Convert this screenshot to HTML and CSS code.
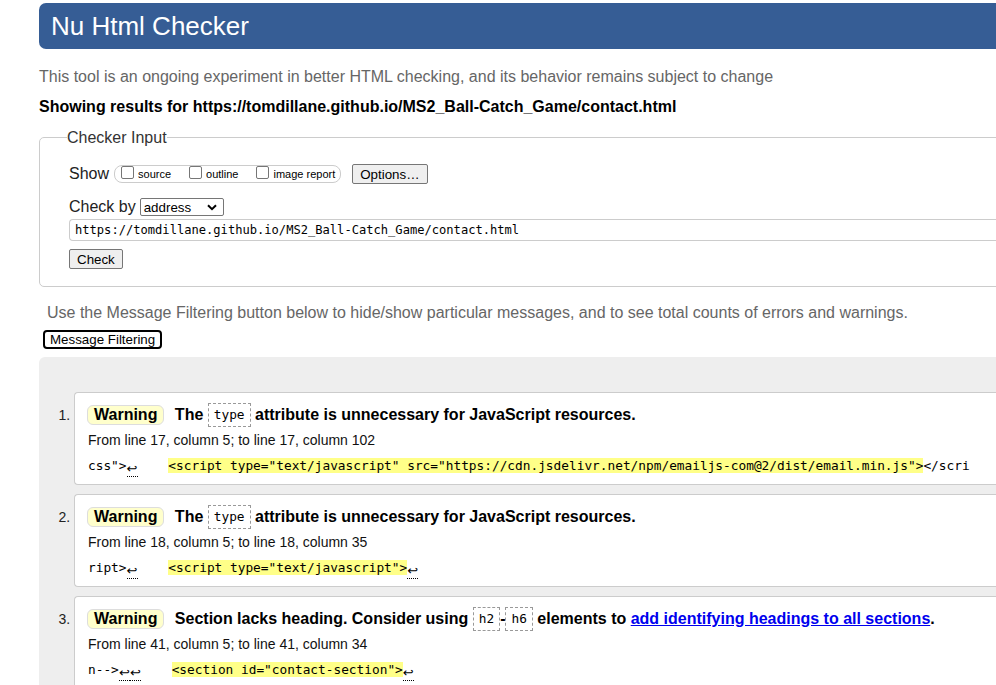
FILE: index.html
```
<!DOCTYPE html>
<html lang="en">
<head>
<meta charset="utf-8">
<title>Nu Html Checker</title>
<link rel="stylesheet" href="styles.css">
</head>
<body>
<div class="page">
  <h1 class="brand">Nu Html Checker</h1>
  <p class="intro">This tool is an ongoing experiment in better HTML checking, and its behavior remains subject to change</p>
  <p class="showing">Showing results for https://tomdillane.github.io/MS2_Ball-Catch_Game/contact.html</p>

  <fieldset class="checker">
    <legend>Checker Input</legend>
    <div class="row show-row">
      <span class="lbl">Show</span>
      <span class="opts">
        <label class="opt"><span class="cb"></span>source</label>
        <label class="opt"><span class="cb"></span>outline</label>
        <label class="opt"><span class="cb"></span>image report</label>
      </span>
      <span class="btn options">Options…</span>
    </div>
    <div class="row checkby-row">
      <span class="lbl">Check by</span>
      <span class="select">address<svg class="chev" width="10" height="7" viewBox="0 0 10 7"><path d="M1 1.2 L5 5.2 L9 1.2" fill="none" stroke="#000" stroke-width="2"/></svg></span>
    </div>
    <div class="url">https://tomdillane.github.io/MS2_Ball-Catch_Game/contact.html</div>
    <span class="btn check">Check</span>
  </fieldset>

  <p class="filter-note">Use the Message Filtering button below to hide/show particular messages, and to see total counts of errors and warnings.</p>
  <span class="btn filter-btn">Message Filtering</span>

  <div class="results">
    <ol class="msgs">
      <li class="msg">
        <p class="title"><strong class="badge">Warning</strong> <span>The <code class="tag">type</code> attribute is unnecessary for JavaScript resources.</span></p>
        <p class="loc">From line 17, column 5; to line 17, column 102</p>
        <p class="extract">css"&gt;<span class="lf">↩</span>    <b>&lt;script type="text/javascript" src="https://cdn.jsdelivr.net/npm/emailjs-com@2/dist/email.min.js"&gt;</b>&lt;/scri</p>
      </li>
      <li class="msg">
        <p class="title"><strong class="badge">Warning</strong> <span>The <code class="tag">type</code> attribute is unnecessary for JavaScript resources.</span></p>
        <p class="loc">From line 18, column 5; to line 18, column 35</p>
        <p class="extract">ript&gt;<span class="lf">↩</span>    <b>&lt;script type="text/javascript"&gt;</b><span class="lf">↩</span></p>
      </li>
      <li class="msg">
        <p class="title"><strong class="badge">Warning</strong> <span>Section lacks heading. Consider using <code class="tag">h2</code>-<code class="tag">h6</code> elements to <a href="#">add identifying headings to all sections</a>.</span></p>
        <p class="loc">From line 41, column 5; to line 41, column 34</p>
        <p class="extract">n--&gt;<span class="lf">↩</span><span class="lf">↩</span>    <b>&lt;section id="contact-section"&gt;</b><span class="lf">↩</span></p>
      </li>
    </ol>
  </div>
</div>
</body>
</html>
```
FILE: styles.css
```
html, body {
  margin: 0;
  padding: 0;
  overflow: hidden;
  background: #fff;
}
body {
  font-family: "Liberation Sans", Arial, sans-serif;
  font-size: 16px;
  color: #000;
}
.page {
  margin-left: 39px;
  width: 1150px;
  padding-top: 3px;
}
.brand {
  margin: 0;
  height: 46px;
  line-height: 46px;
  padding: 0 12px;
  font-size: 26px;
  font-weight: normal;
  color: #fff;
  background: #365d95;
  border-radius: 7px 0 0 7px;
}
.intro {
  margin: 18px 0 0;
  line-height: 19px;
  color: #666;
}
.showing {
  margin: 11px 0 0;
  line-height: 19px;
  font-weight: bold;
}
.checker {
  margin: 12px 0 0;
  border: 1px solid #ccc;
  border-radius: 5px;
  padding: 0 29px 17px;
}
.checker legend {
  padding: 0;
  margin-left: -2px;
  line-height: 19px;
  color: #333;
}
.row {
  display: flex;
  align-items: center;
}
.show-row {
  margin-top: 17px;
  height: 20px;
}
.lbl {
  font-size: 16px;
  color: #222;
}
.opts {
  display: inline-flex;
  align-items: center;
  height: 16px;
  margin-left: 5px;
  padding: 0 5px 0 6px;
  border: 1px solid #ccc;
  border-radius: 8px;
  font-size: 11px;
}
.opt {
  display: inline-flex;
  align-items: center;
  margin-right: 18px;
}
.opt:last-child { margin-right: 0; }
.cb {
  width: 11px;
  height: 11px;
  border: 1px solid #767676;
  border-radius: 2px;
  margin-right: 4px;
  margin-top: -3px;
  background: #fff;
}
.btn {
  display: inline-flex;
  align-items: center;
  box-sizing: border-box;
  font-size: 13.33px;
  background: #efefef;
  border: 1px solid #767676;
  border-radius: 2px;
  padding: 0 7px;
  height: 20px;
}
.options {
  margin-left: 11px;
}
.checkby-row {
  margin-top: 14px;
  height: 18px;
}
.select {
  display: inline-flex;
  align-items: center;
  justify-content: space-between;
  box-sizing: border-box;
  width: 84px;
  height: 18px;
  margin-left: 4px;
  padding: 0 6px 0 3px;
  border: 1px solid #767676;
  border-radius: 2px;
  font-size: 13.33px;
}
.url {
  margin-top: 3px;
  box-sizing: border-box;
  height: 22px;
  line-height: 20px;
  padding-left: 5px;
  border: 1px solid #ccc;
  border-right: none;
  border-radius: 4px 0 0 4px;
  font-family: "DejaVu Sans Mono", "Liberation Mono", monospace;
  font-size: 12.1px;
  color: #000;
}
.check {
  margin-top: 8px;
  padding: 0 7px;
}
.filter-note {
  margin: 16px 0 0 8px;
  line-height: 19px;
  color: #666;
}
.filter-btn {
  margin: 8px 0 0 4px;
  height: 19px;
  padding: 0 5px;
  background: #fff;
  border: 2px solid #000;
  border-radius: 4px;
}
.results {
  margin-top: 8px;
  background: #eee;
  border-radius: 6px 0 0 0;
  padding: 35px 0 20px;
}
.msgs {
  margin: 0;
  padding: 0 0 0 35px;
}
.msg {
  background: #fff;
  border: 1px solid #ccc;
  border-right: none;
  border-radius: 4px 0 0 4px;
  padding: 10px 0 8px 12px;
  margin-bottom: 9px;
}
.msg::marker {
  font-size: 14px;
  color: #222;
}
.msg p { margin: 0; }
.title {
  height: 24px;
  line-height: 24px;
  font-weight: bold;
}
.badge {
  display: inline-block;
  line-height: 18px;
  padding: 0 6px;
  background: #ffc;
  border: 1px solid #ddd;
  border-radius: 6px;
  margin-right: 6px;
}
.tag {
  display: inline-block;
  font-family: "DejaVu Sans Mono", "Liberation Mono", monospace;
  font-weight: normal;
  font-size: 12.8px;
  line-height: 22px;
  padding: 0 5px;
  border: 1px dashed #999;
  vertical-align: top;
}
.title a {
  color: #0000ee;
}
.loc {
  margin-top: 4px !important;
  height: 18px;
  font-size: 14px;
  line-height: 18px;
  padding-left: 1px;
  color: #111;
}
.extract {
  margin-top: 7px !important;
  height: 20px;
  padding-left: 1px;
  font-family: "DejaVu Sans Mono", "Liberation Mono", monospace;
  font-size: 12.8px;
  line-height: 20px;
  white-space: pre;
}
.extract b {
  font-weight: normal;
  background: #ff8;
}
.lf {
  display: inline-block;
  width: 11px;
  height: 15px;
  line-height: 15px;
  vertical-align: -3px;
  font-family: "DejaVu Sans", sans-serif;
  font-size: 13px;
  text-align: center;
  border-bottom: 1px dotted #000;
}
```
